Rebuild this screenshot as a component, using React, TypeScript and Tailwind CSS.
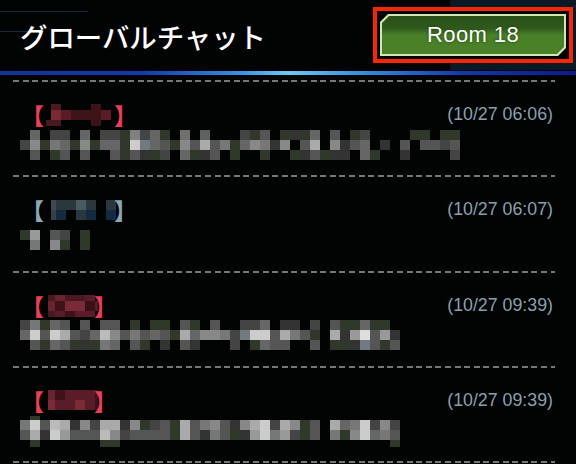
const G = '#30382a';
const B = '#707a80';

type Band = { h: number; cells: string };

// one token per 10px cell: 0 empty, g olive, b blue-grey, otherwise a grey level
function Mosaic({ bands }: { bands: Band[] }) {
  let y = 0;
  const rects: React.ReactNode[] = [];
  bands.forEach((band, i) => {
    band.cells.split(' ').forEach((t, j) => {
      if (t === '0') return;
      const fill = t === 'g' ? G : t === 'b' ? B : `#${t}${t}${t}`;
      rects.push(<rect key={`${i}-${j}`} x={j * 10} y={y} width={10} height={band.h} fill={fill} />);
    });
    y += band.h;
  });
  return (
    <svg width={450} height={y} shapeRendering="crispEdges" className="block">
      {rects}
    </svg>
  );
}

type Cell = [number, number, number, number, string];

function NameBlur({ width, cells }: { width: number; cells: Cell[] }) {
  return (
    <svg width={width} height={22} shapeRendering="crispEdges" className="block -mx-[4px] shrink-0">
      {cells.map(([x, y, w, h, fill], i) => (
        <rect key={i} x={x} y={y} width={w} height={h} fill={fill} />
      ))}
    </svg>
  );
}

const messages = [
  {
    rowClass: 'h-[95px]',
    bracket: 'text-[#e84058]',
    nameWidth: 78,
    name: [
      [11, 0, 10, 6, '#4a1820'], [51, 0, 10, 6, '#3a1418'],
      [11, 6, 10, 10, '#7a2a35'], [21, 6, 10, 10, '#5a1c24'], [31, 6, 30, 10, '#3f1418'], [61, 6, 10, 10, '#5a1c24'],
      [6, 16, 15, 6, '#4a1820'], [51, 16, 10, 6, '#3a1418'],
    ] as Cell[],
    time: '(10/27 06:06)',
    bands: [
      { h: 1, cells: '0' },
      { h: 10, cells: '0 66 0 44 44 0 66 0 44 44 g 80 44 66 g 0 70 0 60 0 0 0 44 g 55 0 g 33 g 66 0 55 0 g 44 0 0 0 0 g g 0 g g' },
      { h: 10, cells: '44 88 g 77 66 g 88 g 66 66 g cc b 66 55 g 88 55 aa 55 77 g 66 88 77 33 88 0 55 aa 0 88 33 55 66 0 33 0 55 0 55 55 44 55' },
      { h: 10, cells: '0 55 0 g 55 0 55 0 0 55 g 55 33 g 44 0 66 g 33 55 0 g 0 0 g 0 0 g 33 55 g 33 33 0 66 g 0 0 33 0 0 0 0 44' },
    ],
  },
  {
    rowClass: 'h-[96px]',
    bracket: 'text-[#8aa8b8]',
    nameWidth: 78,
    name: [
      [11, 1, 5, 10, '#404a50'], [16, 1, 20, 10, '#2a383e'], [36, 1, 10, 10, '#4a5a62'], [46, 1, 10, 10, '#2a383e'], [66, 1, 10, 10, '#2a383e'],
      [11, 11, 5, 10, '#354048'], [16, 11, 10, 10, '#142a40'], [36, 11, 10, 10, '#2a383e'], [46, 11, 10, 10, '#142a40'], [66, 11, 10, 10, '#142a40'],
    ] as Cell[],
    time: '(10/27 06:07)',
    bands: [
      { h: 6, cells: '0' },
      { h: 10, cells: 'g 99 0 55 44 0 g' },
      { h: 10, cells: '0 77 0 88 g 0 g' },
    ],
  },
  {
    rowClass: 'h-[95px]',
    bracket: 'text-[#e84058]',
    nameWidth: 58,
    name: [
      [8, 0, 7, 6, '#4a1820'], [15, 0, 10, 6, '#6a2430'], [25, 0, 20, 6, '#4a1820'], [45, 0, 10, 6, '#5a1c28'],
      [8, 6, 7, 10, '#6a2430'], [15, 6, 10, 10, '#3f1218'], [25, 6, 20, 10, '#7a2a38'], [45, 6, 10, 10, '#3a1016'], [55, 6, 3, 10, '#5a1c24'],
      [8, 16, 7, 6, '#4a1820'], [15, 16, 10, 6, '#5a1c28'], [25, 16, 10, 6, '#3f1218'], [35, 16, 20, 6, '#5a1c28'],
    ] as Cell[],
    time: '(10/27 09:39)',
    bands: [
      { h: 10, cells: '44 77 g 66 55 0 55 0 55 55 0 g 0 g g 0 55 g 0 55 0 0 44 44 66 0 33 33 0 44 0 55 g g 66 g g' },
      { h: 10, cells: '66 cc 55 cc aa 55 44 66 bb 88 55 77 55 66 55 g aa 66 88 88 77 44 b cc cc 55 aa 77 55 g 0 aa 33 99 dd 55 99 33' },
      { h: 10, cells: '0 55 g 66 55 g 33 g 77 66 0 55 g 0 33 0 55 33 0 0 0 44 0 g 66 55 55 0 0 55 0 g g 33 b 55 g 55' },
    ],
  },
  {
    rowClass: 'h-[95px]',
    bracket: 'text-[#e84058]',
    nameWidth: 58,
    name: [
      [8, 0, 7, 10, '#6a2430'], [15, 0, 10, 10, '#3f1218'], [25, 0, 30, 10, '#5a1c28'], [55, 0, 3, 10, '#3f1218'],
      [8, 10, 7, 10, '#7a2a38'], [15, 10, 20, 10, '#5a1c28'], [35, 10, 10, 10, '#7a2a38'], [45, 10, 10, 10, '#5a1c28'], [55, 10, 3, 10, '#3f1218'],
    ] as Cell[],
    time: '(10/27 09:39)',
    bands: [
      { h: 1, cells: '0' },
      { h: 4, cells: '0 g' },
      { h: 10, cells: '77 cc 55 bb aa 33 88 44 aa aa 33 88 g 44 55 g aa 55 77 88 55 33 88 aa cc 44 aa 88 g 55 0 aa 66 77 cc 44 88 44' },
      { h: 10, cells: '55 aa 33 cc 99 55 55 55 bb 88 44 55 55 55 55 g aa 55 33 77 55 g 33 99 cc 77 99 44 g 55 0 77 g 88 cc 66 77 55' },
      { h: 7, cells: '0 g 0 0 0 0 0 0 g g 0 0 0 0 0 0 0 0 0 0 0 0 0 0 0 0 0 0 0 0 0 0 0 0 0 0 0 g' },
    ],
  },
];

function Dashes() {
  return <div className="h-[2px] w-[542px] bg-[repeating-linear-gradient(90deg,#777_0,#777_6px,transparent_6px,transparent_9.6px)]" />;
}

export default function App() {
  return (
    <div className="relative flex h-[464px] w-[576px] flex-col overflow-hidden bg-[#020303] font-['Liberation_Sans',sans-serif]">
      {/* faint game art showing through behind the header */}
      <div className="absolute right-0 top-0 h-[70px] w-[126px] bg-[#0a1a24]" />
      <div className="absolute left-0 top-[11px] h-px w-[88px] bg-[#14293a]" />
      <div className="absolute left-0 top-[31px] h-px w-[30px] bg-[#14293a]" />
      <header className="relative flex h-[70px] shrink-0 items-center justify-between pl-5 pr-[3px]">
        <h1 className="mt-[3px] font-['Noto_Sans_CJK_JP',sans-serif] text-[27.4px] font-medium leading-none text-white">
          グローバルチャット
        </h1>
        <div className="border-[4px] border-[#f5260a] bg-black p-[3px]">
          <div className="h-[42px] w-[186px] bg-[#d2e8b4] p-[2px] [clip-path:polygon(8px_0,100%_0,100%_calc(100%-8px),calc(100%-8px)_100%,0_100%,0_8px)]">
            <button className="flex h-full w-full items-center justify-center bg-[linear-gradient(#2a5016,#2f5a1c_32%,#4a8028_50%,#4a8028)] text-[22px] leading-none tracking-[0.4px] text-white [clip-path:polygon(7px_0,100%_0,100%_calc(100%-7px),calc(100%-7px)_100%,0_100%,0_7px)] [text-shadow:0_0_3px_#1c3a0c]">
              Room 18
            </button>
          </div>
        </div>
      </header>
      <div className="relative mt-[1px] h-[4px] shrink-0 bg-[linear-gradient(90deg,#143298,#1438b0_25%,#3a90e0_42%,#70c8f0_50%,#3a90e0_62%,#1438b0_80%,#0a1a90)]" />
      <div className="mt-[5px] pl-[13px]">
        {messages.map((m, i) => (
          <div key={i} className={m.rowClass}>
            <Dashes />
            <div className="mt-[22px] flex h-[22px] w-[540px] items-center justify-between">
              <div className={`ml-[8px] flex items-center font-['Noto_Sans_CJK_JP',sans-serif] text-[23px] font-black leading-[22px] ${m.bracket}`}>
                <span>【</span>
                <NameBlur width={m.nameWidth} cells={m.name} />
                <span>】</span>
              </div>
              <span className="text-[17.8px] leading-none text-[#8aa0b0]">{m.time}</span>
            </div>
            <div className="ml-[7px] mt-[3px]">
              <Mosaic bands={m.bands} />
            </div>
          </div>
        ))}
        <Dashes />
      </div>
    </div>
  );
}
